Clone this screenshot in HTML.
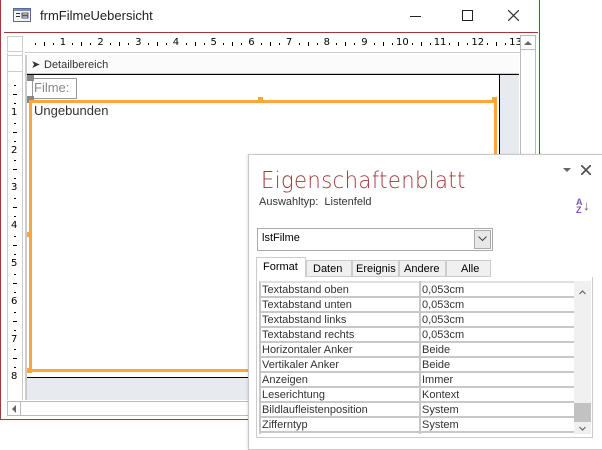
<!DOCTYPE html>
<html><head><meta charset="utf-8"><style>
*{margin:0;padding:0;box-sizing:border-box}
body{width:602px;height:448px;background:#fff;position:relative;overflow:hidden;font-family:"Liberation Sans","DejaVu Sans",sans-serif;font-size:11px;color:#222}
.a{position:absolute}
.rn{position:absolute;font-size:10px;color:#000;font-family:"DejaVu Sans",sans-serif}
.row{position:absolute;left:259px;width:315px;height:15px;border-bottom:2px solid #c8c8c8}
.row span{position:absolute;top:0;line-height:14px;font-size:11px;color:#333}
</style></head><body>
<div class="a" style="left:0;top:0;width:540px;height:420px;border:1px solid #a4373a;border-top:none;background:#fff"></div>
<div class="a" style="left:4px;top:32px;width:534px;height:1px;background:#a4373a"></div>
<svg class="a" style="left:13px;top:8px" width="18" height="14"><rect x="0.5" y="0.5" width="17" height="13" fill="#f4f4fa" stroke="#5a6a9a"/><rect x="1" y="1" width="16" height="2" fill="#7a8ac0"/><rect x="3" y="5" width="4" height="1" fill="#333"/><rect x="3" y="8" width="4" height="1" fill="#333"/><rect x="9" y="5" width="6" height="2" fill="none" stroke="#333" stroke-width="0.8"/><rect x="9" y="8" width="6" height="2" fill="none" stroke="#333" stroke-width="0.8"/></svg>
<div class="a" style="left:40px;top:8px;font-size:13px;color:#222">frmFilmeUebersicht</div>
<div class="a" style="left:410px;top:16px;width:11px;height:1px;background:#222"></div>
<div class="a" style="left:462px;top:10px;width:11px;height:11px;border:1px solid #222"></div>
<svg class="a" style="left:508px;top:10px" width="11" height="11"><path d="M0 0L11 11M11 0L0 11" stroke="#333" stroke-width="1.2"/></svg>
<div class="a" style="left:7px;top:36px;width:16px;height:16px;border:1px solid #ccc"></div>
<div class="a" style="left:25px;top:36px;width:495px;height:17px;border-bottom:1px solid #ccc"></div>
<div class="a" style="left:7px;top:55px;width:16px;height:17px;border:1px solid #ccc"></div>
<div class="a" style="left:7px;top:53px;width:16px;height:347px;border-right:1px solid #ccc;border-left:1px solid #ccc"></div>
<div class="a" style="left:25px;top:55px;width:2px;height:345px;background:#ccc"></div>
<div id="hr"></div>
<div class="a" style="left:27px;top:55px;width:492px;height:19px;background:#fbfbfb;border-bottom:1px solid #ccc"></div>
<div class="a" style="left:31px;top:58px;font-size:11px;color:#333">&#10148;</div>
<div class="a" style="left:44px;top:59px;font-size:11px;color:#333">Detailbereich</div>
<div class="a" style="left:27px;top:74px;width:492px;height:1px;background:#000"></div>
<div class="a" style="left:499px;top:75px;width:20px;height:325px;background:#e7eaee;border-left:1px solid #000"></div>
<div class="a" style="left:27px;top:377px;width:472px;height:23px;background:#e7eaee;border-top:1px solid #000"></div>
<div class="a" style="left:32px;top:78px;width:45px;height:21px;border:1px solid #999;color:#888;font-size:13px;padding:1px 0 0 1px">Filme:</div>
<div class="a" style="left:27px;top:75px;width:7px;height:6px;background:#888"></div>
<div class="a" style="left:27px;top:96px;width:7px;height:7px;background:#888"></div>
<div class="a" style="left:29px;top:100px;width:468px;height:272px;border:3px solid #ffa53a"></div>
<div class="a" style="left:258px;top:97px;width:5px;height:4px;background:#ffa53a"></div>
<div class="a" style="left:492px;top:97px;width:5px;height:5px;background:#ffa53a"></div>
<div class="a" style="left:27px;top:232px;width:4px;height:5px;background:#ffa53a"></div>
<div class="a" style="left:27px;top:368px;width:5px;height:5px;background:#ffa53a"></div>
<div class="a" style="left:34px;top:103px;font-size:13px;color:#333">Ungebunden</div>
<div class="a" style="left:520px;top:35px;width:16px;height:367px;border:1px solid #bbb;background:#fff"></div>
<div class="a" style="left:521px;top:36px;width:14px;height:14px;border-bottom:1px solid #bbb"></div>
<div class="a" style="left:524px;top:41px;width:0;height:0;border-left:4px solid transparent;border-right:4px solid transparent;border-bottom:4px solid #666"></div>
<div class="a" style="left:7px;top:401px;width:260px;height:15px;border:1px solid #bbb"></div>
<div class="a" style="left:8px;top:402px;width:13px;height:13px;border-right:1px solid #bbb"></div>
<div class="a" style="left:12px;top:405px;width:0;height:0;border-top:4px solid transparent;border-bottom:4px solid transparent;border-right:4px solid #666"></div>
<div class="a" style="left:248px;top:154px;width:356px;height:296px;background:#fff;border:1px solid #c8c8c8;box-shadow:-1px 0 2px rgba(0,0,0,.1)"></div>
<div class="a" style="left:563px;top:168px;width:0;height:0;border-left:4px solid transparent;border-right:4px solid transparent;border-top:4px solid #666"></div>
<svg class="a" style="left:581px;top:165px" width="10" height="10"><path d="M0 0L10 10M10 0L0 10" stroke="#555" stroke-width="1.8"/></svg>
<div class="a" style="left:261px;top:168px;font-size:23px;color:#a4373a;letter-spacing:0.4px;font-family:'DejaVu Sans',sans-serif;font-weight:200;transform:scaleX(0.92);transform-origin:left">Eigenschaftenblatt</div>
<div class="a" style="left:259px;top:196px;font-size:11px;color:#333">Auswahltyp:&nbsp;&nbsp;Listenfeld</div>
<div class="a" style="left:576px;top:198px;font-size:9px;line-height:8px;color:#7b52b8;font-weight:bold">A<br>Z</div>
<div class="a" style="left:583px;top:198px;font-size:13px;color:#555">&#8595;</div>
<div class="a" style="left:257px;top:228px;width:236px;height:23px;border:1px solid #aaa"></div>
<div class="a" style="left:262px;top:232px;font-size:11px;color:#000">lstFilme</div>
<div class="a" style="left:474px;top:230px;width:17px;height:19px;border:1px solid #aaa;background:#e8e8e8"></div>
<svg class="a" style="left:478px;top:236px" width="9" height="6"><path d="M0.5 0.5L4.5 4.5L8.5 0.5" stroke="#444" fill="none"/></svg>
<div class="a" style="left:256px;top:257px;width:50px;height:20px;border:1px solid #ccc;border-bottom:none;background:#fff;padding:3px 0 0 6px;font-size:11px;color:#000">Format</div>
<div class="a" style="left:306px;top:260px;width:46px;height:17px;border:1px solid #ccc;background:#f0f0f0;padding:2px 0 0 6px;font-size:11px;color:#000">Daten</div>
<div class="a" style="left:352px;top:260px;width:47px;height:17px;border:1px solid #ccc;background:#f0f0f0;padding:2px 0 0 3px;font-size:11px;color:#000">Ereignis</div>
<div class="a" style="left:399px;top:260px;width:47px;height:17px;border:1px solid #ccc;background:#f0f0f0;padding:2px 0 0 4px;font-size:11px;color:#000">Andere</div>
<div class="a" style="left:446px;top:260px;width:45px;height:17px;border:1px solid #ccc;background:#f0f0f0;padding:2px 0 0 14px;font-size:11px;color:#000">Alle</div>
<div class="a" style="left:256px;top:277px;width:337px;height:161px;border:1px solid #ccc;border-top:none"></div>
<div class="a" style="left:259px;top:281px;width:315px;height:153px;border-left:2px solid #c8c8c8;border-top:2px solid #e0e0e0"></div>
<div class="a" style="left:419px;top:281px;width:2px;height:153px;background:#c8c8c8"></div>
<div class="a" style="left:574px;top:281px;width:17px;height:153px;background:#f0f0f0"></div>
<svg class="a" style="left:579px;top:290px" width="7" height="5"><path d="M0.5 4L3.5 1L6.5 4" stroke="#666" fill="none" stroke-width="1.2"/></svg>
<div class="a" style="left:574px;top:403px;width:17px;height:19px;background:#c2c2c2"></div>
<svg class="a" style="left:579px;top:426px" width="7" height="5"><path d="M0.5 1L3.5 4L6.5 1" stroke="#666" fill="none" stroke-width="1.2"/></svg>
<div id="rows"></div>
<script>
var h='';
for(var i=1;i<=13;i++){var x=25+37.7*i;h+='<div class="rn" style="left:'+(x-(i>9?6:3))+'px;top:37px">'+i+'</div>';
 h+='<div class="a" style="left:'+(x-28)+'px;top:43px;width:1px;height:2px;background:#000"></div>';
 h+='<div class="a" style="left:'+(x-19)+'px;top:42px;width:1px;height:4px;background:#000"></div>';
 h+='<div class="a" style="left:'+(x-10)+'px;top:43px;width:1px;height:2px;background:#000"></div>';}
for(var i=1;i<=8;i++){var y=75+37.8*i;h+='<div class="rn" style="left:11px;top:'+(y-6)+'px">'+i+'</div>';
 h+='<div class="a" style="left:14px;top:'+(y-28)+'px;width:2px;height:1px;background:#000"></div>';
 h+='<div class="a" style="left:13px;top:'+(y-19)+'px;width:4px;height:1px;background:#000"></div>';
 h+='<div class="a" style="left:14px;top:'+(y-10)+'px;width:2px;height:1px;background:#000"></div>';}
document.getElementById('hr').innerHTML=h;
var r=[["Textabstand oben","0,053cm"],["Textabstand unten","0,053cm"],["Textabstand links","0,053cm"],["Textabstand rechts","0,053cm"],["Horizontaler Anker","Beide"],["Vertikaler Anker","Beide"],["Anzeigen","Immer"],["Leserichtung","Kontext"],["Bildlaufleistenposition","System"],["Zifferntyp","System"]];
var s='';for(var i=0;i<r.length;i++){s+='<div class="row" style="top:'+(283+15*i)+'px"><span style="left:3px">'+r[i][0]+'</span><span style="left:163px">'+r[i][1]+'</span></div>';}
document.getElementById('rows').innerHTML=s;
</script>
</body></html>
